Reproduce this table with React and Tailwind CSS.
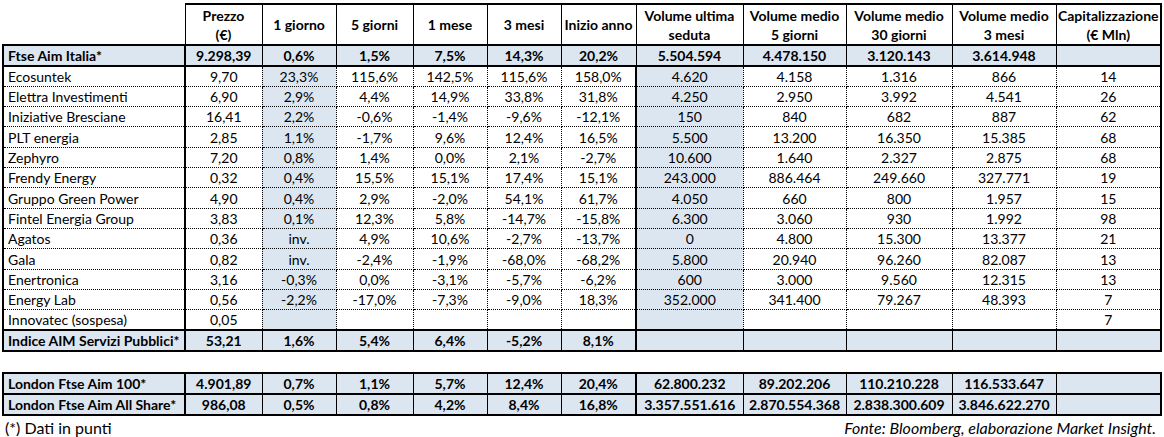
import React from "react";

const COLS = [182, 77, 74, 77, 74, 74, 75, 107, 103, 106, 104, 105];

const HEAD = [
  "",
  ["Prezzo", "(€)"],
  "1 giorno",
  "5 giorni",
  "1 mese",
  "3 mesi",
  "Inizio anno",
  ["Volume ultima", "seduta"],
  ["Volume medio", "5 giorni"],
  ["Volume medio", "30 giorni"],
  ["Volume medio", "3 mesi"],
  ["Capitalizzazione", "(€ Mln)"],
];

const FTSE = ["Ftse Aim Italia*", "9.298,39", "0,6%", "1,5%", "7,5%", "14,3%", "20,2%", "5.504.594", "4.478.150", "3.120.143", "3.614.948", ""];

const BODY = [
  ["Ecosuntek", "9,70", "23,3%", "115,6%", "142,5%", "115,6%", "158,0%", "4.620", "4.158", "1.316", "866", "14"],
  ["Elettra Investimenti", "6,90", "2,9%", "4,4%", "14,9%", "33,8%", "31,8%", "4.250", "2.950", "3.992", "4.541", "26"],
  ["Iniziative Bresciane", "16,41", "2,2%", "-0,6%", "-1,4%", "-9,6%", "-12,1%", "150", "840", "682", "887", "62"],
  ["PLT energia", "2,85", "1,1%", "-1,7%", "9,6%", "12,4%", "16,5%", "5.500", "13.200", "16.350", "15.385", "68"],
  ["Zephyro", "7,20", "0,8%", "1,4%", "0,0%", "2,1%", "-2,7%", "10.600", "1.640", "2.327", "2.875", "68"],
  ["Frendy Energy", "0,32", "0,4%", "15,5%", "15,1%", "17,4%", "15,1%", "243.000", "886.464", "249.660", "327.771", "19"],
  ["Gruppo Green Power", "4,90", "0,4%", "2,9%", "-2,0%", "54,1%", "61,7%", "4.050", "660", "800", "1.957", "15"],
  ["Fintel Energia Group", "3,83", "0,1%", "12,3%", "5,8%", "-14,7%", "-15,8%", "6.300", "3.060", "930", "1.992", "98"],
  ["Agatos", "0,36", "inv.", "4,9%", "10,6%", "-2,7%", "-13,7%", "0", "4.800", "15.300", "13.377", "21"],
  ["Gala", "0,82", "inv.", "-2,4%", "-1,9%", "-68,0%", "-68,2%", "5.800", "20.940", "96.260", "82.087", "13"],
  ["Enertronica", "3,16", "-0,3%", "0,0%", "-3,1%", "-5,7%", "-6,2%", "600", "3.000", "9.560", "12.315", "13"],
  ["Energy Lab", "0,56", "-2,2%", "-17,0%", "-7,3%", "-9,0%", "18,3%", "352.000", "341.400", "79.267", "48.393", "7"],
  ["Innovatec (sospesa)", "0,05", "", "", "", "", "", "", "", "", "", "7"],
];

const INDICE = ["Indice AIM Servizi Pubblici*", "53,21", "1,6%", "5,4%", "6,4%", "-5,2%", "8,1%", "", "", "", "", ""];

const LONDON = [
  ["London Ftse Aim 100*", "4.901,89", "0,7%", "1,1%", "5,7%", "12,4%", "20,4%", "62.800.232", "89.202.206", "110.210.228", "116.533.647", ""],
  ["London Ftse Aim All Share*", "986,08", "0,5%", "0,8%", "4,2%", "8,4%", "16,8%", "3.357.551.616", "2.870.554.368", "2.838.300.609", "3.846.622.270", ""],
];

function Cols() {
  return (
    <colgroup>
      {COLS.map((w, i) => (
        <col key={i} style={{ width: w }} />
      ))}
    </colgroup>
  );
}

function bodyBorder(i) {
  if (i === 0) return "[border-width:1px_2px_1px_2px] [border-style:dotted_solid_dotted_solid]";
  if (i === 6 || i === 11) return "[border-width:1px_2px_1px_1px] [border-style:dotted_solid_dotted_dotted]";
  return "[border-width:1px] [border-style:dotted]";
}

function boldBorder(i, thickVU) {
  if (i === 0) return "[border-width:2px] [border-style:solid]";
  if (i === 11) return "[border-width:2px_2px_2px_1px] [border-style:solid]";
  if (i === 6 && thickVU) return "[border-width:2px_2px_2px_1px] [border-style:solid]";
  return "[border-width:2px_1px] [border-style:solid]";
}

function BoldRow({ data, thickVU }) {
  return (
    <tr className="h-[21px] bg-[#dce6f1] font-bold">
      {data.map((v, i) => (
        <td
          key={i}
          className={`${boldBorder(i, thickVU)} border-black p-0 pt-[1px] leading-[16px] whitespace-nowrap ${
            i === 0 ? "text-left pl-[4px]" : "text-center"
          }`}
        >
          {v}
        </td>
      ))}
    </tr>
  );
}

export default function App() {
  return (
    <div
      className="w-[1164px] h-[437px] bg-white text-black overflow-hidden text-[14px]"
      style={{ fontFamily: "Lato, 'Liberation Sans', sans-serif" }}
    >
      <table className="table-fixed border-collapse ml-[2px] mt-[3px] w-[1158px]">
        <Cols />
        <thead>
          <tr className="h-[41px] font-bold">
            {HEAD.map((h, i) => (
              <th
                key={i}
                className={`${
                  i === 0
                    ? "border-0"
                    : i === 11
                    ? "[border-width:2px_2px_2px_1px] [border-style:solid] border-black"
                    : "[border-width:2px_1px] [border-style:solid] border-black"
                } p-0 text-center align-middle leading-[19px] font-bold whitespace-nowrap`}
              >
                {Array.isArray(h) ? (
                  <>
                    {h[0]}
                    <br />
                    {h[1]}
                  </>
                ) : (
                  h
                )}
              </th>
            ))}
          </tr>
        </thead>
        <tbody>
          <BoldRow data={FTSE} thickVU={false} />
          {BODY.map((r, ri) => (
            <tr key={ri} className="h-[20.33px]">
              {r.map((v, i) => (
                <td
                  key={i}
                  className={`${bodyBorder(i)} border-black p-0 pt-[1px] leading-[16px] whitespace-nowrap ${
                    i === 0 ? "text-left pl-[4px]" : "text-center"
                  } ${i === 2 || i === 7 ? "bg-[#dce6f1]" : ""}`}
                >
                  {v}
                </td>
              ))}
            </tr>
          ))}
          <BoldRow data={INDICE} thickVU={true} />
        </tbody>
      </table>

      <table className="table-fixed border-collapse ml-[2px] mt-[20px] w-[1158px]">
        <Cols />
        <tbody>
          {LONDON.map((r, ri) => (
            <BoldRow key={ri} data={r} thickVU={true} />
          ))}
        </tbody>
      </table>

      <div className="flex justify-between pl-[5px] pr-[8px] mt-[2px] leading-[20px] text-[16px]">
        <span>(*) Dati in punti</span>
        <span className="italic">Fonte: Bloomberg, elaborazione Market Insight.</span>
      </div>
    </div>
  );
}
